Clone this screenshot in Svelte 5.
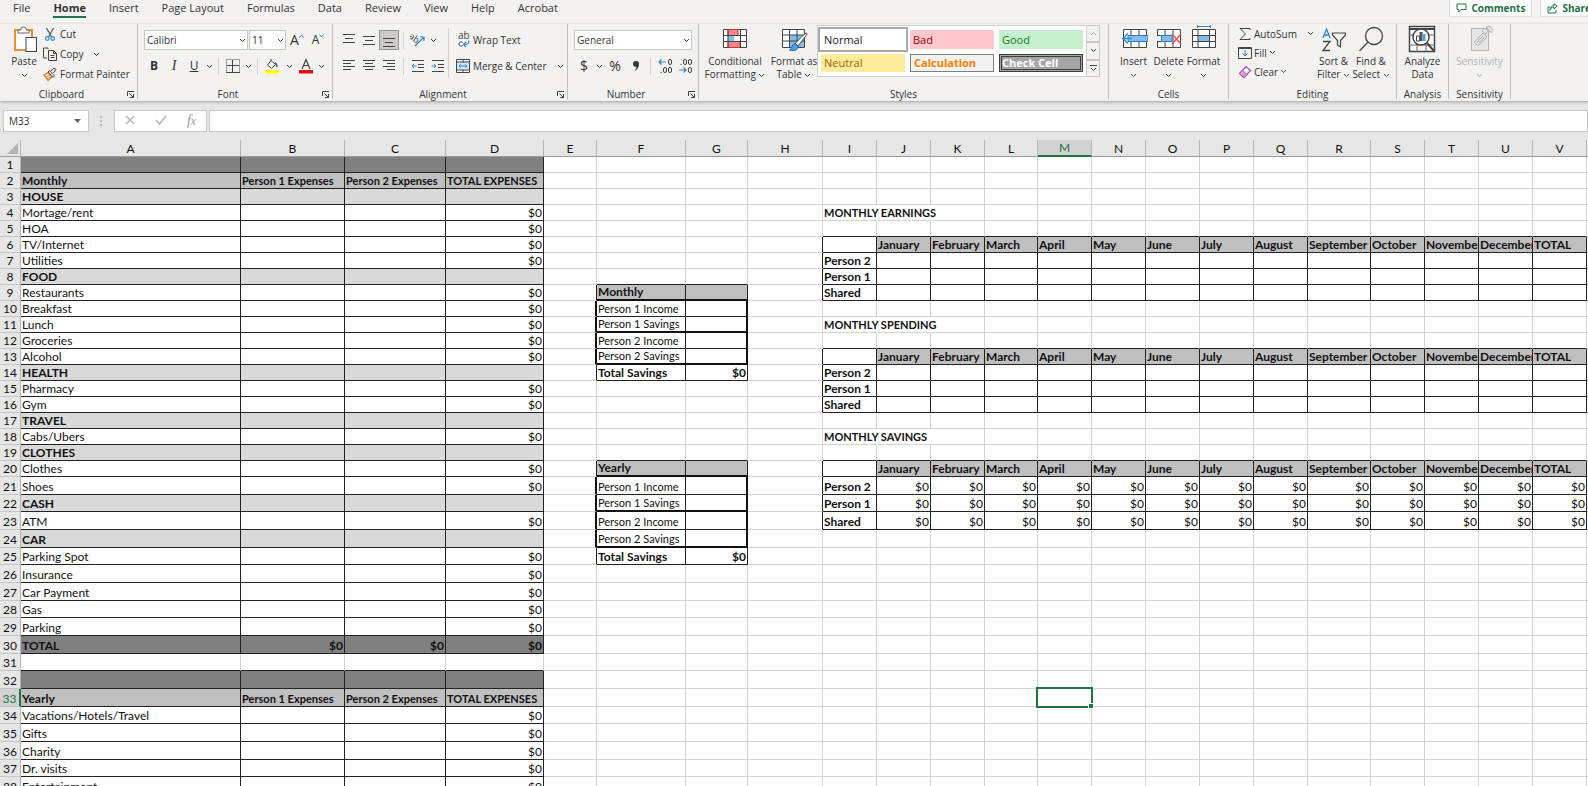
<script>
  const tabs = ["File", "Home", "Insert", "Page Layout", "Formulas", "Data", "Review", "View", "Help", "Acrobat"]

  const columns = [
    ["A", 220], ["B", 104], ["C", 101], ["D", 98], ["E", 53], ["F", 89], ["G", 62], ["H", 75],
    ["I", 54], ["J", 54], ["K", 54], ["L", 53], ["M", 54], ["N", 54], ["O", 54], ["P", 54],
    ["Q", 54], ["R", 63], ["S", 54], ["T", 54], ["U", 54], ["V", 54], ["W", 54],
  ].map(([name, width]) => ({ name, width }))

  const rows = Array.from({ length: 38 }, (_, i) => i + 1)
  const months = [
    "January", "February", "March", "April", "May", "June", "July",
    "August", "September", "October", "November", "December", "TOTAL",
  ]

  let activeTab = $state("Home")
  let selected = $state("M33")
  let formula = $state("")
  let fontName = $state("Calibri")
  let fontSize = $state("11")
  let numberFormat = $state("General")

  const cells = {}

  function put(col, row, text = "", opts = {}) {
    cells[col + row] = { text, box: true, ...opts }
  }

  // expense tables, columns A to D
  function expenses(start, title, lines) {
    for (const col of "ABCD") put(col, start, "", { fill: "dark" })
    const heads = [title, "Person 1 Expenses", "Person 2 Expenses", "TOTAL EXPENSES"]
    heads.forEach((text, i) => put("ABCD"[i], start + 1, text, { fill: "mid", bold: true, compact: i > 0 }))
    lines.forEach((line, i) => {
      const row = start + 2 + i
      const section = line === line.toUpperCase() && !["HOA", "ATM"].includes(line)
      const total = line === "TOTAL"
      const fill = total ? "dark" : section ? "light" : ""
      put("A", row, line, { fill, bold: section })
      for (const col of "BC") put(col, row, total ? "$0" : "", { fill, bold: total, right: true })
      put("D", row, section && !total ? "" : "$0", { fill, bold: total, right: true })
    })
  }

  function savings(start, title) {
    put("F", start, title, { fill: "mid", bold: true, thickBottom: true })
    put("G", start, "", { fill: "mid", thickBottom: true })
    const lines = ["Person 1 Income", "Person 1 Savings", "Person 2 Income", "Person 2 Savings"]
    lines.forEach((text, i) => {
      const row = start + 1 + i
      cells["E" + row] = { text: "", thickRight: true }
      put("F", row, text, { compact: true, thickBottom: i % 2 === 1 })
      put("G", row, "", { thickBottom: i % 2 === 1, thickRight: true })
    })
    put("F", start + 5, "Total Savings", { bold: true })
    put("G", start + 5, "$0", { bold: true, right: true })
  }

  function yearTable(start, title, value) {
    cells["I" + start] = { text: title, bold: true, compact: true, spill: true }
    cells["J" + start] = { text: "", spill: true }
    const names = ["", "Person 2", "Person 1", "Shared"]
    names.forEach((name, r) => {
      const row = start + 2 + r
      put("I", row, name, { bold: true })
      months.forEach((month, m) => {
        const col = "JKLMNOPQRSTUV"[m]
        if (r === 0) put(col, row, month, { fill: "mid", bold: true })
        else put(col, row, value, { right: true })
      })
    })
  }

  expenses(1, "Monthly", [
    "HOUSE", "Mortage/rent", "HOA", "TV/Internet", "Utilities",
    "FOOD", "Restaurants", "Breakfast", "Lunch", "Groceries", "Alcohol",
    "HEALTH", "Pharmacy", "Gym",
    "TRAVEL", "Cabs/Ubers",
    "CLOTHES", "Clothes", "Shoes",
    "CASH", "ATM",
    "CAR", "Parking Spot", "Insurance", "Car Payment", "Gas", "Parking",
    "TOTAL",
  ])
  expenses(32, "Yearly", ["Vacations/Hotels/Travel", "Gifts", "Charity", "Dr. visits", "Entertainment"])
  savings(9, "Monthly")
  savings(20, "Yearly")
  yearTable(4, "MONTHLY EARNINGS", "")
  yearTable(11, "MONTHLY SPENDING", "")
  yearTable(18, "MONTHLY SAVINGS", "$0")

  function cellClass(c, row) {
    const cell = cells[columns[c].name + row] ?? {}
    const next = cells[columns[c + 1]?.name + row]
    const below = cells[columns[c].name + (row + 1)]
    return [
      cell.fill,
      cell.bold && "bold",
      cell.compact && "compact",
      cell.right && "right",
      cell.spill && "spill",
      (cell.box || next?.box) && "line-r",
      (cell.box || below?.box) && "line-b",
      cell.thickRight && "thick-r",
      cell.thickBottom && "thick-b",
    ].filter(Boolean).join(" ")
  }

  function rowHeight(row) {
    if (row <= 20) return 16
    return row % 3 === 1 ? 17 : 18
  }
</script>

{#snippet chevron()}
  <svg class="chevron" width="7" height="5" viewBox="0 0 7 5"><path d="M1 1l2.5 2.5L6 1" /></svg>
{/snippet}

{#snippet lines(strokes)}
  <svg width="14" height="16" viewBox="0 0 14 16" class="ink">
    {#each strokes as [x1, x2, y]}<path d="M{x1} {y}.5H{x2}" />{/each}
  </svg>
{/snippet}

{#snippet launcher()}
  <button class="launcher" aria-label="More options">
    <svg width="9" height="9" viewBox="0 0 9 9" class="ink"><path d="M1.5 6V1.5H8M3.5 3.5l4 4M7.5 4v3.5H4" /></svg>
  </button>
{/snippet}

<div class="app">
  <nav class="tabs">
    {#each tabs as tab}
      <button class="tab" class:active={activeTab === tab} onclick={() => (activeTab = tab)}>{tab}</button>
    {/each}
    <div class="share-bar">
      <button class="pill">
        <svg width="11" height="10" viewBox="0 0 11 10"><path d="M1 1h9v5.500H5L2.800 9V6.500H1z" /></svg>
        Comments
      </button>
      <button class="pill">
        <svg width="11" height="11" viewBox="0 0 11 11"><path d="M3 4H1v6h8V7M3 7.500C3.500 5 5 4 7 4V6l3.200-3L7 .7v1.800C4.500 2.800 3 4.500 3 7.500z" /></svg>
        Share
      </button>
    </div>
  </nav>

  <div class="ribbon">
    <section class="group clipboard">
      <div class="body">
        <button class="large paste">
          <svg width="28" height="28" viewBox="0 0 28 28">
            <rect x="5" y="5" width="17" height="20" fill="#fff" stroke="#e8912d" stroke-width="2" />
            <path d="M8 8V5h2.500a3 3 0 0 1 6 0H19v3z" fill="#fafafa" stroke="#666" />
            <rect x="16" y="12.500" width="10.500" height="14" fill="#fff" stroke="#444" />
          </svg>
          <span>Paste</span>
          <span>{@render chevron()}</span>
        </button>
        <div class="stack">
          <button class="small">
            <svg width="16" height="16" viewBox="0 0 16 16" fill="none">
              <path d="M4.500 2l5 9M11.500 2l-5 9" stroke="#555" stroke-width="1.2" />
              <circle cx="5.3" cy="12.5" r="1.800" stroke="#2b88d8" stroke-width="1.2" /><circle cx="10.7" cy="12.5" r="1.800" stroke="#2b88d8" stroke-width="1.2" />
            </svg>
            Cut
          </button>
          <button class="small">
            <svg width="16" height="16" viewBox="0 0 16 16" class="ink"><path d="M6 3V2H1.5v10H5M6.500 4.500h5L14.500 7.500v7h-8zM11.500 4.500v3h3M8.500 9.500h4M8.500 11.500h4" /></svg>
            Copy <span class="spaced">{@render chevron()}</span>
          </button>
          <button class="small">
            <svg width="16" height="16" viewBox="0 0 16 16">
              <path d="M2 9l4-2.500 3.500 4.500L6 14.500 4.500 12 2 9z" fill="#fff" stroke="#e8812d" stroke-width="1.4" />
              <path d="M3.500 11.500L7 9.500M5 13l3-2" stroke="#e8812d" />
              <path d="M6 6l1.500-1.500 5 5.500-1.500 1.500zM9 5l3-3 2 1.500-2.500 3.500" fill="#eee" stroke="#444" />
            </svg>
            Format Painter
          </button>
        </div>
      </div>
      <div class="caption"><span>Clipboard</span>{@render launcher()}</div>
    </section>

    <section class="group font">
      <div class="body rows">
        <div class="tools">
          <span class="picker font-name">
            <select aria-label="Font" bind:value={fontName}><option>Calibri</option><option>Arial</option></select>
            {@render chevron()}
          </span>
          <span class="picker font-size">
            <select aria-label="Font size" bind:value={fontSize}><option>11</option><option>12</option></select>
            {@render chevron()}
          </span>
          <button class="tool w22" aria-label="Increase font size"><span class="letter big">A</span><svg class="caret" width="5" height="4" viewBox="0 0 5 4"><path d="M.5 3.500l2-2.500 2 2.500" /></svg></button>
          <button class="tool w20" aria-label="Decrease font size"><span class="letter">A</span><svg class="caret" width="5" height="4" viewBox="0 0 5 4"><path d="M.5 .5l2 2.500 2-2.500" /></svg></button>
        </div>
        <div class="tools">
          <button class="tool w20"><b class="letter">B</b></button>
          <button class="tool w20"><i class="letter serif">I</i></button>
          <button class="tool w20"><u class="letter">U</u></button>
          <button class="tool w10" aria-label="Underline styles">{@render chevron()}</button>
          <span class="sep"></span>
          <button class="tool w20" aria-label="Borders">
            <svg width="14" height="14" viewBox="0 0 14 14" class="ink"><path d="M.5 .5h13v13H.5z" stroke-dasharray="1 1" /><path d="M6.500 1v12M1 6.500h12M0 13.500h14" /></svg>
          </button>
          <button class="tool w10" aria-label="Border styles">{@render chevron()}</button>
          <span class="sep"></span>
          <button class="tool w20" aria-label="Fill color">
            <svg width="14" height="16" viewBox="0 0 14 16">
              <path d="M6 2.500l4.500 4L6.500 10.500 2.500 7zM6 2.500V1" fill="#fff" stroke="#444" /><path d="M10 5c1.500.5 2 2 1.500 4" fill="none" stroke="#2b6cb0" stroke-width="1.5" />
              <path d="M0 12h14v3.500H0z" fill="#ffff00" />
            </svg>
          </button>
          <button class="tool w14" aria-label="Fill colors">{@render chevron()}</button>
          <button class="tool w20" aria-label="Font color">
            <svg width="14" height="16" viewBox="0 0 14 16"><path d="M3 11L7 1.500 11 11M4.500 7.500h5" fill="none" stroke="#444" stroke-width="1.2" /><path d="M0 12h14v3.500H0z" fill="#e81010" /></svg>
          </button>
          <button class="tool w10" aria-label="Font colors">{@render chevron()}</button>
        </div>
      </div>
      <div class="caption"><span>Font</span>{@render launcher()}</div>
    </section>

    <section class="group alignment">
      <div class="body">
        <div class="rows narrow">
          <div class="tools">
            <button class="tool w20" aria-label="Top align">{@render lines([[1, 13, 2], [3, 11, 6], [1, 13, 10]])}</button>
            <button class="tool w20" aria-label="Middle align">{@render lines([[1, 13, 4], [3, 11, 8], [1, 13, 12]])}</button>
            <button class="tool w20 pressed" aria-label="Bottom align">{@render lines([[1, 13, 6], [3, 11, 10], [1, 13, 14]])}</button>
            <span class="sep"></span>
            <button class="tool w20" aria-label="Orientation">
              <svg width="16" height="16" viewBox="0 0 16 16"><text x="-1" y="9" font-size="9" transform="rotate(35 4 6)" fill="#444">ab</text><path d="M5 14L14 5M14 9V5h-4" fill="none" stroke="#2b88d8" stroke-width="1.2" /></svg>
            </button>
            <button class="tool w10" aria-label="Orientation styles">{@render chevron()}</button>
          </div>
          <div class="tools">
            <button class="tool w20" aria-label="Align left">{@render lines([[1, 13, 2], [1, 9, 5], [1, 13, 8], [1, 9, 11]])}</button>
            <button class="tool w20" aria-label="Center">{@render lines([[1, 13, 2], [3, 11, 5], [1, 13, 8], [3, 11, 11]])}</button>
            <button class="tool w20" aria-label="Align right">{@render lines([[1, 13, 2], [5, 13, 5], [1, 13, 8], [5, 13, 11]])}</button>
            <span class="sep"></span>
            <button class="tool w20" aria-label="Decrease indent">
              <svg width="14" height="14" viewBox="0 0 14 14" class="ink"><path d="M1 1.5h12M7 5.500h6M7 8.500h6M1 12.500h12" /><path class="blue" d="M5.500 7H1M3 5L1 7l2 2" /></svg>
            </button>
            <button class="tool w20" aria-label="Increase indent">
              <svg width="14" height="14" viewBox="0 0 14 14" class="ink"><path d="M1 1.5h12M7 5.500h6M7 8.500h6M1 12.500h12" /><path class="blue" d="M.5 7H5M3 5l2 2-2 2" /></svg>
            </button>
          </div>
        </div>
        <span class="tall-sep"></span>
        <div class="rows">
          <div class="tools">
            <button class="small">
              <svg width="16" height="18" viewBox="0 0 16 18"><text x="3" y="8" font-size="10" fill="#444">ab</text><path d="M7.500 11.500c-1-1-3.500-.8-3.500 1.500s2.500 2.500 3.500 1.500" fill="none" stroke="#444" /><path d="M13.500 9.500c1 3-.5 4-4.500 4M11 11l-2.500 2.500L11 16" fill="none" stroke="#2b88d8" stroke-width="1.2" /></svg>
              Wrap Text
            </button>
          </div>
          <div class="tools">
            <button class="small">
              <svg width="16" height="16" viewBox="0 0 16 16"><path d="M1.500 1.500h13v13h-13z" fill="#fff" /><path d="M2 4h12v8H2z" fill="#cfe6f8" /><path d="M1.500 1.500h13v13h-13zM1.500 4h13M1.500 12h13M8 1.500V4M8 12v2.500" class="ink" /><path class="blue" fill="none" d="M4 8h8M5.500 6.500L4 8l1.500 1.500M10.500 6.500L12 8l-1.500 1.500" /></svg>
              Merge &amp; Center <span class="spaced">{@render chevron()}</span>
            </button>
          </div>
        </div>
      </div>
      <div class="caption"><span>Alignment</span>{@render launcher()}</div>
    </section>

    <section class="group number">
      <div class="body rows">
        <div class="tools">
          <span class="picker number-format">
            <select aria-label="Number format" bind:value={numberFormat}><option>General</option><option>Currency</option></select>
            {@render chevron()}
          </span>
        </div>
        <div class="tools">
          <button class="tool w20"><span class="letter big">$</span></button>
          <button class="tool w10" aria-label="Currency styles">{@render chevron()}</button>
          <button class="tool w22"><span class="letter big">%</span></button>
          <button class="tool w20" aria-label="Comma style">
            <svg width="8" height="12" viewBox="0 0 8 12"><path d="M1 4a3 3 0 1 1 6 0c0 3-1.500 5.500-4.500 7C4 9 4.500 8 4.500 6.800 2.500 7.200 1 5.800 1 4z" fill="#333" /></svg>
          </button>
          <span class="sep"></span>
          <button class="tool w20" aria-label="Increase decimal">
            <svg width="15" height="16" viewBox="0 0 15 16" fill="none"><path d="M7.500 4H1M3.500 1.500L1 4l2.500 2.500" stroke="#2b88d8" stroke-width="1.2" /><g stroke="#444"><rect x="10.500" y="1.500" width="3" height="5" rx="1.500" /><rect x="5.500" y="9.500" width="3" height="5" rx="1.500" /><rect x="10.500" y="9.500" width="3" height="5" rx="1.500" /><path d="M2.500 14.500h1.200" /></g></svg>
          </button>
          <button class="tool w20" aria-label="Decrease decimal">
            <svg width="15" height="16" viewBox="0 0 15 16" fill="none"><path d="M1 12h7M5.500 9.500L8 12l-2.500 2.500" stroke="#2b88d8" stroke-width="1.2" /><g stroke="#444"><rect x="5.500" y="1.500" width="3" height="5" rx="1.500" /><rect x="10.500" y="1.500" width="3" height="5" rx="1.500" /><rect x="10.500" y="9.500" width="3" height="5" rx="1.500" /><path d="M2.500 6.500h1.200" /></g></svg>
          </button>
        </div>
      </div>
      <div class="caption"><span>Number</span>{@render launcher()}</div>
    </section>

    <section class="group styles">
      <div class="body">
        <button class="large conditional">
          <svg width="28" height="28" viewBox="0 0 28 28">
            <path d="M2.500 4.500h23v18h-23z" fill="#fff" stroke="#444" />
            <path d="M7 4.500h10v6H7zM7 16.500h12v6H7z" fill="#f4858a" stroke="#d13438" /><path d="M7 10.500h6v6H7z" fill="#83bdec" />
            <path d="M7 4v19M19.500 4v19M2 10.500h24M2 16.500h24" stroke="#444" fill="none" />
          </svg>
          <span>Conditional</span>
          <span>Formatting {@render chevron()}</span>
        </button>
        <button class="large table-format">
          <svg width="28" height="28" viewBox="0 0 28 28">
            <path d="M2.500 4.500h22v18h-22z" fill="#fff" stroke="#444" />
            <path d="M9 10h15v12H9z" fill="#83bdec" />
            <path d="M9.500 4v19M17 4v19M2 10h23M2 16h23" stroke="#444" fill="none" />
            <path d="M25 8.500c2-1 2.500 0 1.500 1.500L18 21l-3-2.500z" fill="#fff" stroke="#444" />
            <path d="M15 18.500l3 2.500c0 4-3 5.500-8.500 4 3-1.500 2-5.500 5.500-6.500z" fill="#4aa0e6" stroke="#1f6fb5" />
          </svg>
          <span>Format as</span>
          <span>Table {@render chevron()}</span>
        </button>
        <div class="gallery">
          <button class="swatch normal">Normal</button>
          <button class="swatch bad">Bad</button>
          <button class="swatch good">Good</button>
          <button class="swatch neutral">Neutral</button>
          <button class="swatch calculation">Calculation</button>
          <button class="swatch check">Check Cell</button>
        </div>
        <div class="scroller">
          <button aria-label="Scroll up" disabled><svg width="7" height="5" viewBox="0 0 7 5"><path d="M1 4l2.500-2.500L6 4" /></svg></button>
          <button aria-label="Scroll down">{@render chevron()}</button>
          <button aria-label="More styles"><svg width="7" height="8" viewBox="0 0 7 8"><path d="M0 1.500h7M1 4l2.500 2.500L6 4" /></svg></button>
        </div>
      </div>
      <div class="caption"><span>Styles</span></div>
    </section>

    <section class="group cells">
      <div class="body spread">
        <button class="large">
          <svg width="28" height="28" viewBox="0 0 28 28">
            <path d="M3.500 4.500h23v18h-23zM11 4v19M19 4v19" fill="#fff" stroke="#444" />
            <path d="M8 10.500h20v6H8z" fill="#83bdec" stroke="#2b7cc4" /><path d="M2 13.500h10M8 8.500l-5 5 5 5" fill="none" stroke="#2b88d8" stroke-width="1.4" />
          </svg>
          <span>Insert</span>
          <span>{@render chevron()}</span>
        </button>
        <button class="large">
          <svg width="28" height="28" viewBox="0 0 28 28">
            <path d="M2.500 4.500h23v18h-23zM10 4v19M18 4v19" fill="#fff" stroke="#444" />
            <path d="M1 10h15v7H1z" fill="#f3f2f1" /><path d="M6.500 10.500H17v6H6.500z" fill="#83bdec" stroke="#2b7cc4" /><path d="M2 10.500h4M2 16.500h4" stroke="#444" />
            <path d="M17 9l9 10M26 9l-9 10" stroke="#f0504c" stroke-width="1.5" />
          </svg>
          <span>Delete</span>
          <span>{@render chevron()}</span>
        </button>
        <button class="large">
          <svg width="28" height="28" viewBox="0 0 28 28">
            <path d="M2.500 4.500h23v18h-23z" fill="#fff" stroke="#444" />
            <path d="M8 10h11v7H8z" fill="#83bdec" /><path d="M8 4v19M19.500 4v19M2 10.500h24M2 16.500h24" fill="none" stroke="#444" />
            <path d="M7.500 1.500h13M7.500 0v3M20.500 0v3" stroke="#2b88d8" />
          </svg>
          <span>Format</span>
          <span>{@render chevron()}</span>
        </button>
      </div>
      <div class="caption"><span>Cells</span></div>
    </section>

    <section class="group editing">
      <div class="body">
        <div class="stack tight">
          <button class="small">
            <svg width="14" height="14" viewBox="0 0 14 14" class="ink"><path d="M12 3V1.500H2L7.500 7 2 12.500h10V11" /></svg>
            AutoSum <span class="spaced">{@render chevron()}</span>
          </button>
          <button class="small">
            <svg width="14" height="14" viewBox="0 0 14 14" class="ink"><path d="M.5 1.500h13v11H.5z" /><path d="M.5 2.500h13" /><path class="blue" d="M7 4v6M4.500 7.500L7 10l2.500-2.500" /></svg>
            Fill {@render chevron()}
          </button>
          <button class="small">
            <svg width="14" height="14" viewBox="0 0 14 14"><path d="M8 1.500l4.500 4L6 12.500 1.500 8.500z" fill="#fff" stroke="#a846b0" stroke-width="1.2" /><path d="M4.500 5.500l4.500 4-3 3-4.500-4z" fill="#d9a3de" stroke="#a846b0" /></svg>
            Clear {@render chevron()}
          </button>
        </div>
        <button class="large sort">
          <svg width="28" height="28" viewBox="0 0 28 28" fill="none">
            <path d="M3 13L6.500 4 10 13M4.200 10h4.600" stroke="#2b88d8" stroke-width="1.3" />
            <path d="M3 16.500h7L3 25.500h7" stroke="#444" stroke-width="1.3" /><path d="M12.500 8h13v2l-5 5.500V22l-3-2v-4.500l-5-5.500z" stroke="#444" stroke-width="1.2" />
          </svg>
          <span>Sort &amp;</span>
          <span>Filter {@render chevron()}</span>
        </button>
        <button class="large find">
          <svg width="28" height="28" viewBox="0 0 28 28" fill="none"><circle cx="17" cy="11" r="8.500" stroke="#444" stroke-width="1.3" /><path d="M11 17l-8.500 9" stroke="#444" stroke-width="1.3" /></svg>
          <span>Find &amp;</span>
          <span>Select {@render chevron()}</span>
        </button>
      </div>
      <div class="caption"><span>Editing</span></div>
    </section>

    <section class="group analysis">
      <div class="body spread">
        <button class="large">
          <svg width="28" height="28" viewBox="0 0 28 28">
            <path d="M1.500 1.500h25v25h-25z" fill="#fff" stroke="#444" stroke-width="1.5" /><path d="M1 4h26" stroke="#444" stroke-width="2" />
            <path d="M1 10h26M1 20h26M9 5v22M18 5v22" stroke="#666" />
            <circle cx="13" cy="12" r="8" fill="#fff" stroke="#444" stroke-width="1.5" /><path d="M19 18l7 8" stroke="#444" stroke-width="2" />
            <path d="M8.500 11h3v5h-3z" fill="#fff" stroke="#444" /><path d="M11.500 7h3v9h-3z" fill="#555" /><path d="M14.500 9h3v7h-3z" fill="#4aa0e6" />
          </svg>
          <span>Analyze</span>
          <span>Data</span>
        </button>
      </div>
      <div class="caption"><span>Analysis</span></div>
    </section>

    <section class="group sensitivity">
      <div class="body spread">
        <button class="large" disabled>
          <svg width="28" height="28" viewBox="0 0 28 28" fill="#e6e6e6" stroke="#b5b3b1">
            <path d="M5.500 3.500h17v22h-17z" /><path d="M8 17l9-9 4 4-9 9z" fill="#ddd" /><path d="M11 17l5.500-5.500M13 18l5-5M16 6l3-3 3 3-2.500 3zM20 2l4-1 3 4-2 3z" />
          </svg>
          <span>Sensitivity</span>
          <span>{@render chevron()}</span>
        </button>
      </div>
      <div class="caption"><span>Sensitivity</span></div>
    </section>
  </div>

  <div class="formula-bar">
    <div class="name-box">
      <input aria-label="Name box" bind:value={selected} />
      <button aria-label="Named ranges"><svg width="7" height="4" viewBox="0 0 7 4"><path d="M0 0h7L3.500 4z" fill="#666" /></svg></button>
    </div>
    <svg class="grip" width="3" height="11" viewBox="0 0 3 11"><path d="M0 0h2v2H0zM0 4h2v2H0zM0 8h2v2H0z" fill="#b5b5b5" /></svg>
    <div class="entry-buttons">
      <button aria-label="Cancel"><svg width="10" height="10" viewBox="0 0 10 10"><path d="M1 1l8 8M9 1L1 9" /></svg></button>
      <button aria-label="Enter"><svg width="12" height="10" viewBox="0 0 12 10"><path d="M1 5l3.500 4L11 1" /></svg></button>
      <button class="fx">f<small>x</small></button>
    </div>
    <input class="formula" aria-label="Formula" bind:value={formula} />
  </div>

  <div class="sheet">
    <table>
      <colgroup>
        <col class="row-col" />
        {#each columns as col}<col style:width="{col.width}px" />{/each}
      </colgroup>
      <thead>
        <tr>
          <th class="corner"><svg width="11" height="11" viewBox="0 0 11 11"><path d="M11 0v11H0z" fill="#b2b2b2" /></svg></th>
          {#each columns as col}
            <th scope="col" class:current={selected.replace(/\d+/, "") === col.name}>{col.name}</th>
          {/each}
        </tr>
      </thead>
      <tbody>
        {#each rows as row}
          <tr style:height="{rowHeight(row)}px">
            <th scope="row" class:current={selected.replace(/\D+/, "") === String(row)}>{row}</th>
            {#each columns as col, c}
              <td class={cellClass(c, row)} class:selected={selected === col.name + row} onclick={() => (selected = col.name + row)}>{cells[col.name + row]?.text ?? ""}</td>
            {/each}
          </tr>
        {/each}
      </tbody>
    </table>
  </div>
</div>

<style>
  :global(body) {
    margin: 0;
    background: #e6e6e6;
  }

  .app {
    display: flex;
    flex-direction: column;
    height: 100vh;
    overflow: hidden;
    font-family: "Open Sans", "Noto Sans", sans-serif;
    font-size: 10px;
    color: #333;
  }

  button,
  input,
  select {
    margin: 0;
    padding: 0;
    border: 0;
    border-radius: 0;
    background: none;
    font: inherit;
    color: inherit;
  }

  svg {
    flex: none;
  }

  .ink {
    fill: none;
    stroke: #444;
  }

  .blue {
    stroke: #2b88d8;
  }

  .chevron {
    fill: none;
    stroke: #444;
  }

  .tabs {
    display: flex;
    align-items: flex-start;
    gap: 23px;
    height: 24px;
    padding-left: 13px;
    background: #f3f2f1;
  }

  .tab {
    height: 18px;
    line-height: 16px;
    font-size: 11px;
    white-space: nowrap;
    border-bottom: 2px solid transparent;
  }

  .tab.active {
    font-weight: 700;
    border-color: #217346;
  }

  .share-bar {
    display: flex;
    gap: 8px;
    margin-left: auto;
    margin-right: -10px;
  }

  .pill {
    display: flex;
    align-items: center;
    gap: 4px;
    height: 17px;
    padding: 0 6px;
    background: #fff;
    border: 1px solid #e1dfdd;
    border-top: 0;
    box-sizing: border-box;
    font-weight: 700;
    color: #217346;
  }

  .pill svg {
    fill: none;
    stroke: #217346;
  }

  .ribbon {
    position: relative;
    display: flex;
    height: 77px;
    background: #f3f2f1;
    box-shadow: 0 1px 3px rgba(0, 0, 0, 0.3);
  }

  .group {
    flex: none;
    display: flex;
    flex-direction: column;
    box-sizing: border-box;
    height: 75px;
    border-right: 1px solid #c0bebc;
  }

  .clipboard {
    width: 138px;
  }
  .font {
    width: 195px;
  }
  .alignment {
    width: 235px;
  }
  .number {
    width: 131px;
  }
  .styles {
    width: 410px;
  }
  .cells {
    width: 120px;
  }
  .editing {
    width: 168px;
  }
  .analysis {
    width: 52px;
  }
  .sensitivity {
    width: 62px;
  }

  .body {
    display: flex;
    box-sizing: border-box;
    flex: none;
    height: 63px;
  }

  .spread {
    justify-content: center;
  }

  .caption {
    display: flex;
    flex: none;
    line-height: 14px;
  }

  .caption span {
    flex: 1;
    text-align: center;
  }

  .launcher {
    width: 14px;
    line-height: 0;
  }

  .large {
    display: flex;
    flex-direction: column;
    align-items: center;
    height: 60px;
    min-width: 35px;
    line-height: 13px;
    white-space: nowrap;
  }

  .large > svg {
    margin: 1px 0 2px;
  }

  .large span {
    height: 13px;
  }

  .large span .chevron {
    vertical-align: middle;
  }

  .large:disabled {
    color: #b1afad;
  }

  .large:disabled .chevron {
    stroke: #b1afad;
  }

  .paste {
    width: 36px;
    margin-left: 6px;
  }

  .stack {
    display: flex;
    flex-direction: column;
    flex: none;
  }

  .small {
    display: flex;
    align-items: center;
    gap: 2px;
    height: 20px;
    white-space: nowrap;
  }

  .tight {
    width: 78px;
    padding-left: 9px;
  }

  .tight .small {
    height: 19px;
  }

  .spaced {
    margin-left: 8px;
    line-height: 0;
  }

  .rows {
    display: flex;
    flex-direction: column;
    padding: 3px 0 0 6px;
  }

  .narrow {
    width: 109px;
  }

  .tools {
    display: flex;
    align-items: center;
    height: 26px;
  }

  .tool {
    display: flex;
    align-items: center;
    justify-content: center;
    height: 20px;
  }

  .w10 {
    width: 10px;
  }
  .w14 {
    width: 14px;
  }
  .w20 {
    width: 20px;
  }
  .w22 {
    width: 22px;
  }

  .pressed {
    box-sizing: border-box;
    background: #cdcbc9;
    border: 1px solid #979593;
  }

  .letter {
    font-size: 12px;
    line-height: 16px;
  }

  .big {
    font-size: 14px;
  }

  .serif {
    font-family: "Liberation Serif", serif;
    font-size: 14px;
  }

  .caret {
    align-self: flex-start;
    margin-top: 4px;
    fill: none;
    stroke: #2b88d8;
  }

  .sep {
    width: 1px;
    height: 17px;
    margin: 0 4px;
    background: #d2d0ce;
  }

  .tall-sep {
    width: 1px;
    height: 50px;
    margin-top: 4px;
    background: #d2d0ce;
  }

  .picker {
    position: relative;
    height: 20px;
  }

  .picker select {
    width: 100%;
    height: 20px;
    padding: 0 2px;
    box-sizing: border-box;
    appearance: none;
    background: #fff;
    border: 1px solid #c8c6c4;
    color: #333;
  }

  .picker .chevron {
    position: absolute;
    top: 8px;
    right: 2px;
    pointer-events: none;
  }

  .font-name {
    width: 104px;
    margin-right: 1px;
  }
  .font-size {
    width: 37px;
  }
  .number-format {
    width: 118px;
  }

  .conditional {
    width: 72px;
  }
  .table-format {
    width: 46px;
  }

  .gallery {
    display: grid;
    grid-template-columns: repeat(3, 84px);
    grid-template-rows: 19px 18px;
    gap: 5px;
    box-sizing: border-box;
    height: 52px;
    margin-top: 1px;
    padding: 4px 3px;
    background: #fff;
    border: 1px solid #d2d0ce;
  }

  .swatch {
    padding: 0 3px;
    box-sizing: border-box;
    text-align: left;
    font-size: 11px;
    line-height: 16px;
  }

  .normal {
    color: #222;
    outline: 2px solid #ababab;
    outline-offset: 1px;
  }
  .bad {
    background: #ffc7ce;
    color: #9c0006;
  }
  .good {
    background: #c6efce;
    color: #117a1b;
  }
  .neutral {
    background: #ffeb9c;
    color: #9c6500;
  }
  .calculation {
    border: 1px solid #7f7f7f;
    background: #f2f2f2;
    color: #fa7d00;
    font-weight: 700;
  }
  .check {
    padding: 0;
    border: 3px double #3f3f3f;
    background: #a5a5a5;
    color: #fff;
    font-weight: 700;
    line-height: 12px;
  }

  .scroller {
    display: grid;
    grid-template-rows: repeat(3, 1fr);
    width: 13px;
    height: 52px;
    margin-top: 1px;
  }

  .scroller button {
    display: flex;
    align-items: center;
    justify-content: center;
    border: 1px solid #c8c6c4;
    border-left: 0;
  }

  .scroller svg {
    fill: none;
    stroke: #444;
  }

  .scroller button:disabled svg {
    stroke: #b1afad;
  }

  .sort {
    width: 34px;
  }
  .find {
    width: 40px;
  }

  .formula-bar {
    display: flex;
    flex: none;
    align-items: center;
    height: 22px;
    padding: 9px 0 8px 3px;
  }

  .name-box {
    display: flex;
    box-sizing: border-box;
    width: 86px;
    height: 22px;
    background: #fff;
    border: 1px solid #c8c8c8;
  }

  .name-box input {
    width: 60px;
    padding-left: 5px;
  }

  .name-box button {
    width: 16px;
    line-height: 0;
  }

  .grip {
    margin: 0 11px;
  }

  .entry-buttons {
    display: flex;
    justify-content: space-around;
    align-items: center;
    box-sizing: border-box;
    width: 93px;
    height: 22px;
    background: #fff;
    border: 1px solid #c8c8c8;
  }

  .entry-buttons svg {
    fill: none;
    stroke: #b5b5b5;
    stroke-width: 1.5;
  }

  .fx {
    font: italic 14px "Liberation Serif", serif;
    color: #999;
  }

  .formula {
    flex: 1;
    box-sizing: border-box;
    height: 22px;
    margin-left: 2px;
    background: #fff;
    border: 1px solid #c8c8c8;
  }

  .sheet {
    flex: 1;
    overflow: hidden;
    font-family: Lato, sans-serif;
    font-size: 12px;
    line-height: 14px;
    color: #111;
  }

  table {
    width: 0;
    table-layout: fixed;
    border-spacing: 0;
    background: #fff;
  }

  .row-col {
    width: 21px;
  }

  th {
    box-sizing: border-box;
    padding: 0;
    background: #e6e6e6;
    border-right: 1px solid #b5b5b5;
    border-bottom: 1px solid #c6c6c6;
    font-weight: 400;
    text-align: center;
    vertical-align: bottom;
  }

  thead tr {
    height: 17px;
  }

  thead th {
    border-bottom: 1px solid #9b9b9b;
  }

  .corner {
    line-height: 0;
    text-align: right;
    padding: 0 2px 2px 0;
  }

  th.current {
    background: #d2d2d2;
    color: #217346;
  }

  thead th.current {
    border-bottom: 2px solid #217346;
  }

  tbody th.current {
    border-right: 2px solid #217346;
  }

  td {
    box-sizing: border-box;
    padding: 0 1px;
    overflow: hidden;
    white-space: nowrap;
    vertical-align: bottom;
    border-right: 1px solid #d4d4d4;
    border-bottom: 1px solid #d4d4d4;
  }

  .line-r {
    border-right-color: #222;
  }
  .line-b {
    border-bottom-color: #222;
  }
  .thick-r {
    border-right: 2px solid #111;
  }
  .thick-b {
    border-bottom: 2px solid #111;
  }

  .dark {
    background: #808080;
  }
  .mid {
    background: #bfbfbf;
  }
  .light {
    background: #d9d9d9;
  }
  .bold {
    font-weight: 700;
  }
  .compact {
    font-size: 11px;
  }
  .right {
    text-align: right;
  }

  .spill {
    overflow: visible;
    border-right-color: transparent;
  }

  .selected {
    position: relative;
    overflow: visible;
  }

  .selected::before {
    content: "";
    position: absolute;
    inset: -2px;
    border: 2px solid #217346;
  }

  .selected::after {
    content: "";
    position: absolute;
    right: -3px;
    bottom: -3px;
    width: 4px;
    height: 4px;
    background: #217346;
    border: 1px solid #fff;
  }
</style>
